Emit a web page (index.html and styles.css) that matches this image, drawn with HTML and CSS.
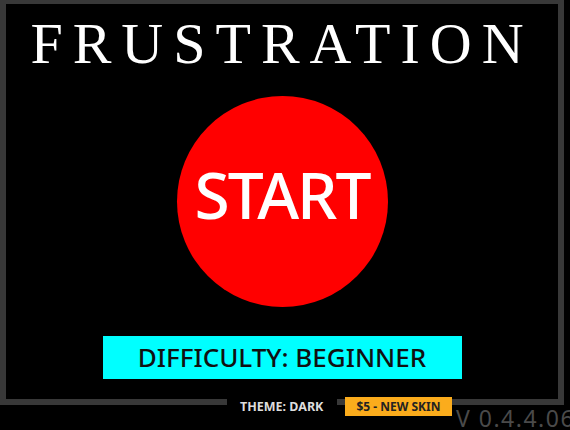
FILE: index.html
```html
<!DOCTYPE html>
<html lang="en">
<head>
  <meta charset="UTF-8">
  <meta name="viewport" content="width=device-width, initial-scale=1">
  <title>Frustration</title>
  <link rel="stylesheet" href="styles.css">
</head>
<body>

  <div class="frame">
    <h1 class="title">FRUSTRATION</h1>

    <button class="btn-start" onclick="startGame()">START</button>

    <button class="btn-difficulty" id="difficulty" onclick="nextDifficulty()">DIFFICULTY: BEGINNER</button>

    <!-- fica por cima da borda de baixo -->
    <div class="footer">
      <span class="theme" id="theme" onclick="toggleTheme()">THEME: DARK</span>
      <button class="btn-skin">$5 - NEW SKIN</button>
      <span class="version">V 0.4.4.06</span>
    </div>
  </div>

  <script>
    const niveis = ['BEGINNER', 'EASY', 'NORMAL', 'HARD', 'INSANE'];
    let nivel = 0;

    function nextDifficulty() {
      nivel = (nivel + 1) % niveis.length;
      document.getElementById('difficulty').textContent = 'DIFFICULTY: ' + niveis[nivel];
    }

    function toggleTheme() {
      const el = document.getElementById('theme');
      el.textContent = el.textContent === 'THEME: DARK' ? 'THEME: LIGHT' : 'THEME: DARK';
    }

    function startGame() {
      // ainda nada aqui
    }
  </script>

</body>
</html>
```

FILE: styles.css
```css
body {
  margin: 0;
  width: 570px;
  height: 430px;
  overflow: hidden;
  background: #000;
  font-family: "Noto Sans", "Open Sans", sans-serif;
}
.frame {
  position: relative;
  box-sizing: border-box;
  width: 564px;
  height: 405px;
  border: 6px solid #383838;
  border-top-width: 4px;
  display: flex;
  flex-direction: column;
  align-items: center;
}
.title {
  margin: 11px 0 0;
  font-family: "Liberation Serif", "Times New Roman", serif;
  font-weight: normal;
  font-size: 58px;
  line-height: 1;
  letter-spacing: 10px;
  color: #fff;
}
.btn-start {
  margin-top: 23px;
  width: 211px;
  height: 211px;
  border: none;
  border-radius: 50%;
  background: #f00;
  color: #fff;
  font-family: inherit;
  font-size: 64px;
  font-weight: 500;
  line-height: 1;
  letter-spacing: -2px;
  padding: 0 0 14px;
  cursor: pointer;
}
.btn-difficulty {
  margin-top: 29px;
  width: 359px;
  height: 43px;
  border: none;
  background: #0ff;
  color: #111;
  font-family: inherit;
  font-size: 26px;
  font-weight: 500;
  line-height: 43px;
  padding: 0;
  cursor: pointer;
}
.footer {
  position: absolute;
  top: 393px;
  left: 221px;
  display: flex;
  align-items: flex-start;
  gap: 8px;
}
.theme {
  background: #000;
  color: #ddd;
  font-size: 12.5px;
  font-weight: bold;
  line-height: 19px;
  padding: 0 11px 0 13px;
  width: 86px;
  cursor: pointer;
}
.btn-skin {
  width: 107px;
  height: 19px;
  border: none;
  padding: 0;
  background: #fbac1c;
  color: #222;
  font-family: inherit;
  font-size: 12px;
  font-weight: bold;
  line-height: 19px;
  cursor: pointer;
}
.version {
  margin: 10px 0 0 -4px;
  color: #4a4a4a;
  font-size: 23px;
  line-height: 22px;
  letter-spacing: 1.5px;
  white-space: nowrap;
}
```
